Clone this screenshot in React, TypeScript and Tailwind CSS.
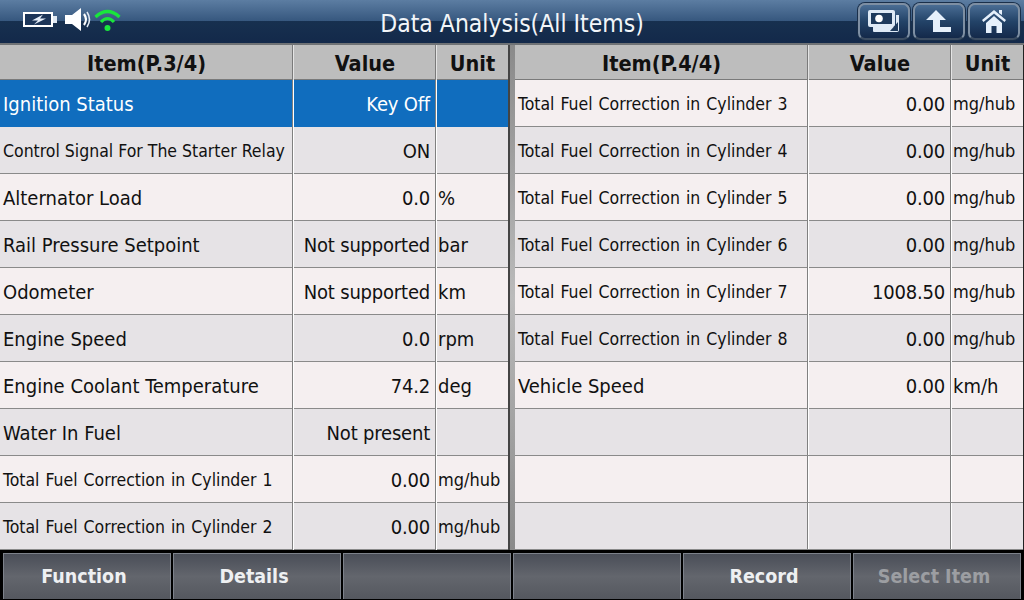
const left: [string, string, string, number?][] = [
  ["Ignition Status", "Key Off", "", 20],
  ["Control Signal For The Starter Relay", "ON", "", 17.5],
  ["Alternator Load", "0.0", "%", 20],
  ["Rail Pressure Setpoint", "Not supported", "bar", 20],
  ["Odometer", "Not supported", "km", 20],
  ["Engine Speed", "0.0", "rpm", 20],
  ["Engine Coolant Temperature", "74.2", "deg", 20],
  ["Water In Fuel", "Not present", "", 20],
  ["Total Fuel Correction in Cylinder 1", "0.00", "mg/hub", 17.5],
  ["Total Fuel Correction in Cylinder 2", "0.00", "mg/hub", 17.5],
];
const right: [string, string, string, number?][] = [
  ["Total Fuel Correction in Cylinder 3", "0.00", "mg/hub", 17.5],
  ["Total Fuel Correction in Cylinder 4", "0.00", "mg/hub", 17.5],
  ["Total Fuel Correction in Cylinder 5", "0.00", "mg/hub", 17.5],
  ["Total Fuel Correction in Cylinder 6", "0.00", "mg/hub", 17.5],
  ["Total Fuel Correction in Cylinder 7", "1008.50", "mg/hub", 17.5],
  ["Total Fuel Correction in Cylinder 8", "0.00", "mg/hub", 17.5],
  ["Vehicle Speed", "0.00", "km/h", 20],
  ["", "", "", 20],
  ["", "", "", 20],
  ["", "", "", 20],
];

function Table({ title, rows, selected }: { title: string; rows: [string, string, string, number?][]; selected?: number }) {
  return (
    <div className="flex w-[508px] flex-col">
      <div className="grid h-[35px] grid-cols-[294px_143px_71px] border-b border-[#7a7a7a] bg-[#bdbdbd] text-[21.5px] font-bold leading-[37px] text-[#111]">
        <div className="border-r border-r-[#e4e4e4] text-center shadow-[inset_-1px_0_0_#7a7a7a]">{title}</div>
        <div className="border-r border-r-[#e4e4e4] text-center shadow-[inset_-1px_0_0_#7a7a7a]">Value</div>
        <div className="text-center">Unit</div>
      </div>
      {rows.map((r, i) => {
        const sel = i === selected;
        const bg = sel ? "border-[#106dbe] bg-[#106dbe] text-white" : i % 2 === 0 ? "border-[#8a8a8a] bg-[#f5eff0] text-[#111]" : "border-[#8a8a8a] bg-[#e6e3e6] text-[#111]";
        return (
          <div key={i} className={`grid h-[47px] grid-cols-[294px_143px_71px] border-b leading-[48px] ${bg}`}>
            <div className={`truncate border-r border-r-[#fff] pl-[3px] shadow-[inset_-1px_0_0_#808080] ${r[0].startsWith("Total") ? "[word-spacing:1px]" : ""}`} style={{ fontSize: r[3] }}>{r[0]}</div>
            <div className="border-r border-r-[#fff] pr-[6px] text-right text-[20px] tracking-[-0.2px] shadow-[inset_-1px_0_0_#808080]">{r[1]}</div>
            <div className={`truncate pl-[1px] ${r[2] === "mg/hub" ? "text-[18px]" : "text-[20px]"}`}>{r[2]}</div>
          </div>
        );
      })}
    </div>
  );
}

function Btn({ label, disabled }: { label: string; disabled?: boolean }) {
  return (
    <div className={`flex h-[46px] w-[168px] items-center justify-center border-x border-t border-[#7d828b] bg-gradient-to-b from-[#4a4e58] via-[#63666d] to-[#55585f] pr-[6px] text-[19.5px] font-bold ${disabled ? "text-[#9c9ea2]" : "text-[#eef0f2]"}`}>
      {label}
    </div>
  );
}

function TopBtn({ children }: { children: React.ReactNode }) {
  return (
    <div className="flex h-[37px] w-[52px] items-center justify-center rounded-[7px] border-2 border-[#7e8fa3] border-b-[#3c4d62] bg-gradient-to-b from-[#4a6d94] via-[#234368] to-[#14294a] shadow-[0_0_0_1px_#1a2f4a]">
      {children}
    </div>
  );
}

export default function App() {
  return (
    <div className="flex h-[600px] w-[1024px] flex-col overflow-hidden bg-[#222]" style={{ fontFamily: '"DejaVu Sans Condensed", "DejaVu Sans", sans-serif' }}>
      <header className="relative flex h-[45px] items-center justify-between border-b-2 border-[#6f7275] bg-[linear-gradient(to_bottom,#5c7da2_0%,#37587f_48%,#17304f_50%,#13294a_100%)] pb-[1px] pl-[23px] pr-[4px]">
        <div className="flex items-center gap-[7px] pb-[3px]">
          <svg width="34" height="15" viewBox="0 0 34 15">
            <rect x="1" y="1" width="28" height="13" fill="#1c3558" stroke="#fff" strokeWidth="2" />
            <rect x="30" y="4" width="4" height="7" fill="#dfe8f2" />
            <path d="M20 2.5 L9 8.5 H15 L11 12.5 L23 6.5 H17 Z" fill="#e6eef8" />
          </svg>
          <div className="flex items-center gap-[2px]">
            <svg width="28" height="25" viewBox="0 0 28 25">
              <path d="M1 8 H8 L17 1 V24 L8 17 H1 Z" fill="#fff" />
              <path d="M20 7 Q24 12.5 20 18" stroke="#fff" strokeWidth="2.2" fill="none" />
              <path d="M23 5 Q28 12.5 23 20" stroke="#dfe8f2" strokeWidth="1.6" fill="none" />
            </svg>
            <svg width="27" height="24" viewBox="0 0 27 24">
              <path d="M1.5 9 Q13.5 -2 25.5 9" stroke="#19e63c" strokeWidth="3.2" fill="none" />
              <path d="M7 14 Q13.5 7 20 14" stroke="#19e63c" strokeWidth="3.2" fill="none" />
              <circle cx="13.5" cy="20" r="3" fill="#19e63c" />
            </svg>
          </div>
        </div>
        <div className="absolute inset-x-0 top-[6px] text-center text-[24.5px] leading-[36px] text-[#f2f5f8]">Data Analysis(All Items)</div>
        <div className="relative flex gap-[3px]">
          <TopBtn>
            <svg width="34" height="26" viewBox="0 0 34 26">
              <path d="M6 19 V23 Q6 24 7 24 H30 Q32 24 32 22 V7 H29 V19 Z" fill="#dfeaf6" />
              <rect x="1" y="2" width="27" height="17" rx="2" fill="#dfeaf6" />
              <rect x="4" y="5" width="21" height="11" fill="#1e3a5c" />
              <circle cx="12" cy="10.5" r="3.8" fill="#fff" />
              <path d="M23 23 L31 14 V23 Z" fill="#1e3a5c" />
            </svg>
          </TopBtn>
          <TopBtn>
            <svg width="26" height="24" viewBox="0 0 26 24">
              <path d="M10 1 L20 11 H14 V18 H25 V23 H7 V11 H0 Z" fill="#e6f0fb" />
            </svg>
          </TopBtn>
          <TopBtn>
            <svg width="26" height="26" viewBox="0 0 26 26">
              <path d="M13 2 L25 12 L23.5 14 L13 5.5 L2.5 14 L1 12 Z M18 2 H21 V7 L18 5 Z" fill="#e6f0fb" />
              <path d="M5 15 L13 8 L21 15 V25 H15.5 V18 H10.5 V25 H5 Z" fill="#e6f0fb" />
            </svg>
          </TopBtn>
        </div>
      </header>
      <main className="flex h-[505px]">
        <Table title="Item(P.3/4)" rows={left} selected={0} />
        <div className="w-[7px] border-l-2 border-[#444] bg-gradient-to-b from-[#8a8a8a] via-[#bbbbbb] to-[#8a8a8a]" />
        <div className="w-[509px]">
          <Table title="Item(P.4/4)" rows={right} />
        </div>
      </main>
      <footer className="flex h-[50px] items-end gap-[2px] bg-black pb-[1px] pl-[3px]">
        <Btn label="Function" />
        <Btn label="Details" />
        <Btn label="" />
        <Btn label="" />
        <Btn label="Record" />
        <Btn label="Select Item" disabled />
      </footer>
    </div>
  );
}
